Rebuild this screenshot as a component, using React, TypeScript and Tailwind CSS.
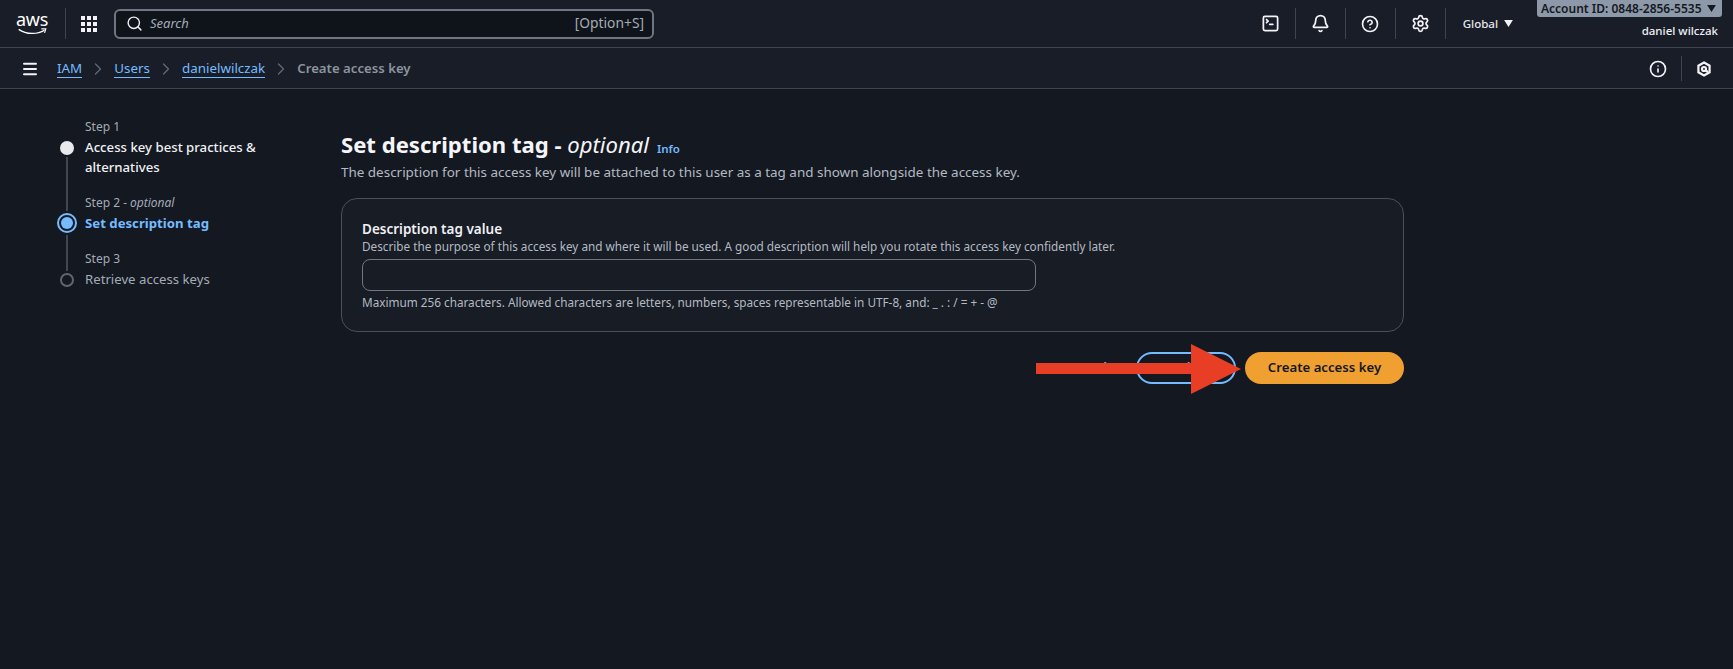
import { Bell, ChevronRight, CircleHelp, Info, Menu, Search, Settings, SquareTerminal } from 'lucide-react'

const font = { fontFamily: '"Noto Sans", sans-serif' }

function Sep({ className = 'h-[31px]' }: { className?: string }) {
  return <span className={`w-px bg-[#3f4550] ${className}`} />
}

function NavIcon({ children }: { children: React.ReactNode }) {
  return <span className="flex w-[49px] items-center justify-center text-[#f3f3f7]">{children}</span>
}

function Caret({ className = '' }: { className?: string }) {
  return (
    <svg viewBox="0 0 10 8" className={`h-[7px] w-[9px] fill-current ${className}`}>
      <path d="M0 0h10L5 8z" />
    </svg>
  )
}

function Crumb({ label }: { label: string }) {
  return (
    <>
      <a className="border-b border-[#75bbff] text-[13.4px] leading-[18px] text-[#75bbff]">{label}</a>
      <ChevronRight className="mx-[6px] h-[20px] w-[20px] text-[#5f6b7a]" strokeWidth={1.5} />
    </>
  )
}

function Step({
  label,
  optional,
  title,
  lines,
  state,
  first,
  last,
}: {
  label: string
  optional?: boolean
  title: string
  lines?: string[]
  state: 'done' | 'active' | 'todo'
  first?: boolean
  last?: boolean
}) {
  return (
    <li className="flex gap-[8px]">
      <div className="flex w-[20px] flex-col items-center">
        {state === 'active' ? (
          <>
            <span className="h-[16px] w-[2px] bg-[#414750]" />
            <span className="my-[2px] flex h-[20px] w-[20px] items-center justify-center rounded-full border-2 border-[#75bbff]">
              <span className="h-[12px] w-[12px] rounded-full bg-[#75bbff]" />
            </span>
          </>
        ) : (
          <>
            <span className={`h-[20px] w-[2px] ${first ? '' : 'bg-[#414750]'}`} />
            <span className={`my-[2px] h-[14px] w-[14px] rounded-full ${state === 'done' ? 'bg-[#e9e9ed]' : 'border-2 border-[#5f6670]'}`} />
          </>
        )}
        {!last && <span className="w-[2px] flex-1 bg-[#414750]" />}
      </div>
      <div className={last ? '' : 'pb-[18px]'}>
        <div className="text-[12px] leading-[16px] text-[#a4abb5]">
          {label}
          {optional && <i> - optional</i>}
        </div>
        <div
          className={`mt-[2px] text-[13.2px] leading-[20px] ${
            state === 'active' ? 'font-bold text-[#75bbff]' : state === 'done' ? 'font-medium text-[#f0f0f4]' : 'text-[#a4abb5]'
          }`}
        >
          {lines ? lines.map((l) => <div key={l}>{l}</div>) : title}
        </div>
      </div>
    </li>
  )
}

export default function App() {
  return (
    <div style={font} className="relative min-h-[669px] bg-[#131821] text-white">
      <header className="flex h-[48px] items-center border-b border-[#3f4550] bg-[#181d28]">
        <div className="ml-[16px] flex w-[49px] flex-col">
          <span className="text-[18px] leading-[14px] tracking-[-0.3px] text-white">aws</span>
          <svg viewBox="0 0 32 9" className="mt-[2px] h-[8px] w-[32px]">
            <path d="M1 1.5c9 6 21 6 29 1" fill="none" stroke="#fff" strokeWidth="1.5" />
            <path d="M26.5 1H31.5l-1.4 4.5" fill="none" stroke="#fff" strokeWidth="1.3" />
          </svg>
        </div>
        <Sep />
        <div className="ml-[15px] grid grid-cols-3 gap-[2px]">
          {Array.from({ length: 9 }).map((_, i) => (
            <span key={i} className="h-[4px] w-[4px] bg-[#f3f3f7]" />
          ))}
        </div>
        <div className="ml-[17px] flex h-[30px] w-[540px] items-center rounded-[6px] border-2 border-[#6f7682] bg-[#0f141a] pl-[10px] pr-[8px]">
          <Search className="h-[17px] w-[17px] text-[#f0f0f4]" strokeWidth={2} />
          <span className="ml-[7px] flex-1 text-[13px] italic text-[#a4abb5]">Search</span>
          <span className="text-[13.8px] text-[#a4abb5]">[Option+S]</span>
        </div>

        <div className="ml-auto flex items-center">
          <NavIcon>
            <SquareTerminal className="h-[19px] w-[19px]" strokeWidth={2.2} />
          </NavIcon>
          <Sep />
          <NavIcon>
            <Bell className="h-[19px] w-[19px]" strokeWidth={2.2} />
          </NavIcon>
          <Sep />
          <NavIcon>
            <CircleHelp className="h-[18px] w-[18px]" strokeWidth={2.2} />
          </NavIcon>
          <Sep />
          <NavIcon>
            <Settings className="h-[19px] w-[19px]" strokeWidth={2.2} />
          </NavIcon>
          <Sep />
          <span className="ml-[17px] flex items-center gap-[6px] text-[11.5px] font-medium text-[#e6e6ea]">
            Global
            <Caret className="text-[#f3f3f7]" />
          </span>
          <div className="ml-[24px] mr-[11px] flex h-[47px] flex-col items-end self-start">
            <div className="flex h-[17px] w-[185px] items-center justify-between rounded-b-[3px] bg-[#8d99a8] pl-[4px] pr-[6px] text-[12px] font-semibold text-[#14181f]">
              Account ID: 0848-2856-5535
              <Caret />
            </div>
            <div className="mt-[6px] pr-[4px] text-[11.5px] font-medium leading-[16px] text-[#f0f0f4]">daniel wilczak</div>
          </div>
        </div>
      </header>

      <nav className="flex h-[41px] items-center border-b border-[#3f4550] bg-[#181d28] pl-[21px] pt-[1px]">
        <Menu className="mr-[18px] h-[18px] w-[18px] text-[#f3f3f7]" strokeWidth={2.6} />
        <Crumb label="IAM" />
        <Crumb label="Users" />
        <Crumb label="danielwilczak" />
        <span className="text-[13.2px] font-semibold text-[#8d949e]">Create access key</span>
        <div className="ml-auto flex items-center">
          <Info className="h-[18px] w-[18px] text-[#f3f3f7]" strokeWidth={2.2} />
          <span className="mx-[14px] h-[25px] w-px bg-[#3f4550]" />
          <svg viewBox="0 0 16 16" className="mr-[21px] h-[16px] w-[16px] fill-none stroke-[#f3f3f7]" strokeWidth="2.2">
            <path d="M8 1.5l5.6 3.2v6.6L8 14.5l-5.6-3.2V4.7z" />
            <circle cx="8" cy="8" r="2" />
            <path d="M9 9l3 2" />
          </svg>
        </div>
      </nav>

      <main className="flex pt-[30px]">
        <aside className="ml-[57px] w-[284px] shrink-0">
          <ol>
            <Step label="Step 1" title="" lines={['Access key best practices &', 'alternatives']} state="done" first />
            <Step label="Step 2" optional title="Set description tag" state="active" />
            <Step label="Step 3" title="Retrieve access keys" state="todo" last />
          </ol>
        </aside>

        <section className="w-[1063px] pt-[10px]">
          <div className="flex items-baseline">
            <h1 className="text-[22.1px] font-bold leading-[30px] text-[#f5f5f8]">
              Set description tag - <i className="font-normal">optional</i>
            </h1>
            <a className="ml-[8px] text-[11.5px] font-semibold text-[#75bbff]">Info</a>
          </div>
          <p className="mt-[3px] text-[13.45px] leading-[20px] text-[#b4bac2]">
            The description for this access key will be attached to this user as a tag and shown alongside the access key.
          </p>

          <div className="mt-[16px] h-[134px] rounded-[16px] border border-[#4a505a] bg-[#171c25] px-[20px] pt-[21px]">
            <div className="text-[13.5px] font-semibold leading-[18px] text-[#f0f0f4]">Description tag value</div>
            <div className="text-[11.75px] leading-[16px] text-[#b4bac2]">
              Describe the purpose of this access key and where it will be used. A good description will help you rotate this access key confidently later.
            </div>
            <input className="mt-[5px] block h-[32px] w-[674px] rounded-[8px] border border-[#6f7682] bg-transparent" />
            <div className="mt-[3px] text-[11.75px] leading-[16px] text-[#b4bac2]">
              Maximum 256 characters. Allowed characters are letters, numbers, spaces representable in UTF-8, and: _ . : / = + - @
            </div>
          </div>

          <div className="mt-[20px] flex items-center justify-end">
            <button className="mr-[29px] text-[13.3px] font-semibold text-[#75bbff]">Cancel</button>
            <button className="mr-[9px] h-[32px] w-[100px] rounded-full border-2 border-[#75bbff] text-[13.3px] font-semibold text-[#75bbff]">Previous</button>
            <button className="h-[32px] w-[159px] rounded-full bg-[#f09f31] text-[13.2px] font-semibold text-[#14181f]">Create access key</button>
          </div>
        </section>
      </main>

      <svg viewBox="0 0 206 50" className="absolute left-[1036px] top-[344px] h-[50px] w-[206px]">
        <path d="M0 19h155V0l50 25-50 25V30H0z" fill="#e83e25" />
      </svg>
    </div>
  )
}
